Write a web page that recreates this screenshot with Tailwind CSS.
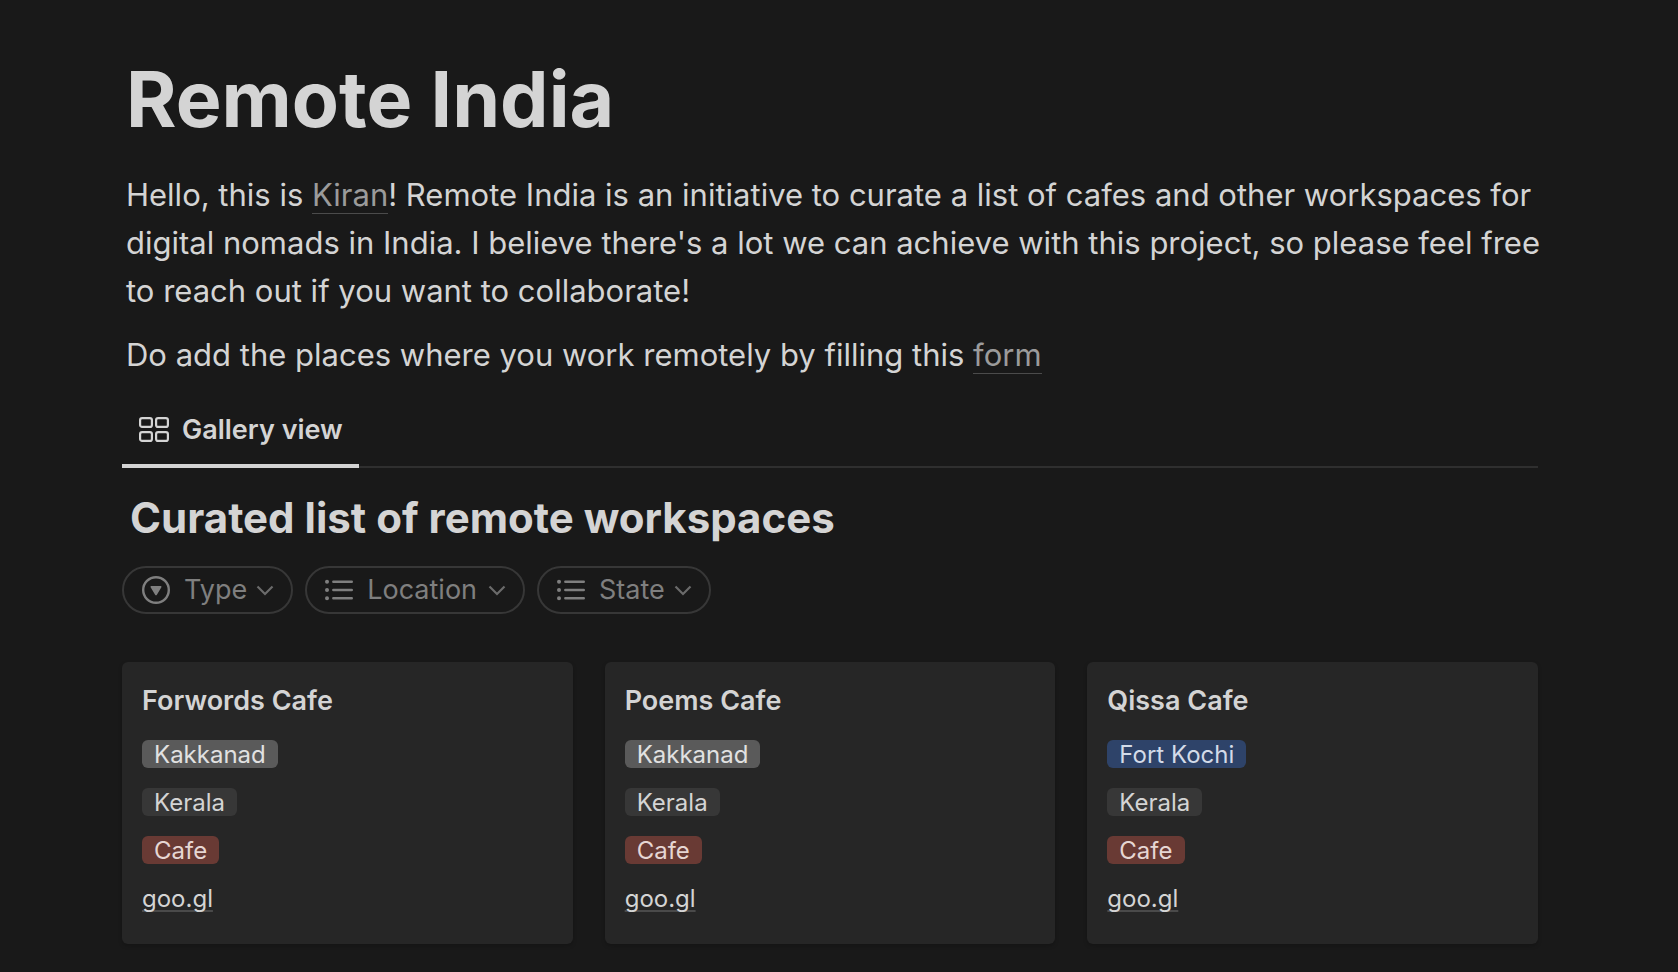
<!DOCTYPE html>
<html lang="en">
<head>
<meta charset="utf-8">
<meta name="viewport" content="width=device-width, initial-scale=1">
<title>Remote India</title>
<script src="https://cdn.jsdelivr.net/npm/@tailwindcss/browser@4"></script>
</head>
<body class="min-h-screen bg-[#191919] font-['Inter','Liberation_Sans',sans-serif] text-[#d4d4d4]">
<main class="pt-[51px] pr-[140px] pb-7 pl-[122px]">
  <header class="-mr-4 pl-1">
    <h1 class="text-[77px] leading-[96px] font-bold">Remote India</h1>
    <p class="mt-6 text-[31px] leading-[48px]">Hello, this is <a href="#" class="border-b border-[#4b4b4b] text-[#9b9b9b]">Kiran</a>! Remote India is an initiative to curate a list of cafes and other workspaces for digital nomads in India. I believe there's a lot we can achieve with this project, so please feel free to reach out if you want to collaborate!</p>
    <p class="mt-4 text-[31px] leading-[48px]">Do add the places where you work remotely by filling this <a href="#" class="border-b border-[#4b4b4b] text-[#9b9b9b]">form</a></p>
  </header>

  <nav class="mt-4 flex shadow-[inset_0_-2px_0_#2f2f2f]" aria-label="Views">
    <button type="button" class="flex h-[73px] items-center gap-3 border-b-4 border-[#d4d4d4] px-4 text-[27px] leading-8 font-semibold">
      <svg class="h-8 w-8" viewBox="0 0 32 32" fill="none" stroke="currentColor" stroke-width="2.2" aria-hidden="true">
        <rect x="2.1" y="4.1" width="11.8" height="8.800" rx="2"/><rect x="18.100" y="4.1" width="11.8" height="8.8" rx="2"/>
        <rect x="2.1" y="18.1" width="11.8" height="8.8" rx="2"/><rect x="18.1" y="18.1" width="11.8" height="8.8" rx="2"/>
      </svg>
      Gallery view
    </button>
  </nav>

  <h2 class="mt-[22px] px-2 text-[42px] leading-[56px] font-bold">Curated list of remote workspaces</h2>

  <div class="mt-5 flex gap-3 text-[27px] leading-8 text-[#7f7f7f]">
    <button type="button" class="flex h-12 items-center gap-2 rounded-full border-2 border-[#373737] px-4">
      <svg class="mr-1 h-8 w-8" viewBox="0 0 32 32" fill="none" aria-hidden="true"><circle cx="16" cy="16" r="12.8" stroke="currentColor" stroke-width="2.4"/><path d="M11.4 12h9.2c.7 0 1.100.7.8 1.300l-4.500 7.400c-.4.7-1.400.7-1.800 0l-4.500-7.400c-.3-.6.1-1.300.8-1.300z" fill="currentColor"/></svg>
      Type
      <svg class="h-5 w-5 text-[#6b6b6b]" viewBox="0 0 20 20" fill="none" stroke="currentColor" stroke-width="2.200" aria-hidden="true"><path d="M2.500 6.500l7.500 7.500 7.500-7.500"/></svg>
    </button>
    <button type="button" class="flex h-12 items-center gap-2 rounded-full border-2 border-[#373737] px-4">
      <svg class="mr-1 h-8 w-8" viewBox="0 0 32 32" fill="none" stroke="currentColor" stroke-width="2.4" stroke-linecap="round" aria-hidden="true"><path d="M10.300 7.700h18.500M10.300 16h18.500M10.300 24.300h18.500"/><path d="M4 7.700h.01M4 16h.01M4 24.300h.01" stroke-width="4"/></svg>
      Location
      <svg class="ml-0.5 h-5 w-5 text-[#6b6b6b]" viewBox="0 0 20 20" fill="none" stroke="currentColor" stroke-width="2.2" aria-hidden="true"><path d="M2.5 6.5l7.5 7.5 7.5-7.5"/></svg>
    </button>
    <button type="button" class="flex h-12 items-center gap-2 rounded-full border-2 border-[#373737] px-4">
      <svg class="mr-1 h-8 w-8" viewBox="0 0 32 32" fill="none" stroke="currentColor" stroke-width="2.4" stroke-linecap="round" aria-hidden="true"><path d="M10.3 7.7h18.5M10.3 16h18.5M10.3 24.3h18.5"/><path d="M4 7.7h.01M4 16h.01M4 24.3h.01" stroke-width="4"/></svg>
      State
      <svg class="h-5 w-5 text-[#6b6b6b]" viewBox="0 0 20 20" fill="none" stroke="currentColor" stroke-width="2.2" aria-hidden="true"><path d="M2.5 6.5l7.5 7.5 7.5-7.5"/></svg>
    </button>
  </div>

  <section class="mt-12 grid grid-cols-3 gap-8 text-2xl leading-[26px]">
    <article class="flex flex-col items-start gap-5 rounded-md bg-[#262626] px-5 pt-5 pb-8 shadow-[0_2px_4px_rgba(0,0,0,0.2)]">
      <h3 class="text-[27px] leading-[38px] font-semibold">Forwords Cafe</h3>
      <span class="rounded-md bg-[#5a5a5a] px-3 pt-0.5 text-[#e1e1e1]">Kakkanad</span>
      <span class="rounded-md bg-[#373737] px-3 pt-0.5">Kerala</span>
      <span class="rounded-md bg-[#693a34] px-3 pt-0.5 text-[#e6d6d3]">Cafe</span>
      <a href="#" class="pt-0.5 underline decoration-[#4a4a4a] decoration-2 underline-offset-3 [text-decoration-skip-ink:none]">goo.gl</a>
    </article>
    <article class="flex flex-col items-start gap-5 rounded-md bg-[#262626] px-5 pt-5 pb-8 shadow-[0_2px_4px_rgba(0,0,0,0.2)]">
      <h3 class="text-[27px] leading-[38px] font-semibold">Poems Cafe</h3>
      <span class="rounded-md bg-[#5a5a5a] px-3 pt-0.5 text-[#e1e1e1]">Kakkanad</span>
      <span class="rounded-md bg-[#373737] px-3 pt-0.5">Kerala</span>
      <span class="rounded-md bg-[#693a34] px-3 pt-0.5 text-[#e6d6d3]">Cafe</span>
      <a href="#" class="pt-0.5 underline decoration-[#4a4a4a] decoration-2 underline-offset-3 [text-decoration-skip-ink:none]">goo.gl</a>
    </article>
    <article class="flex flex-col items-start gap-5 rounded-md bg-[#262626] px-5 pt-5 pb-8 shadow-[0_2px_4px_rgba(0,0,0,0.2)]">
      <h3 class="text-[27px] leading-[38px] font-semibold">Qissa Cafe</h3>
      <span class="rounded-md bg-[#2e4369] px-3 pt-0.5 text-[#d3dbe8]">Fort Kochi</span>
      <span class="rounded-md bg-[#373737] px-3 pt-0.5">Kerala</span>
      <span class="rounded-md bg-[#693a34] px-3 pt-0.5 text-[#e6d6d3]">Cafe</span>
      <a href="#" class="pt-0.5 underline decoration-[#4a4a4a] decoration-2 underline-offset-3 [text-decoration-skip-ink:none]">goo.gl</a>
    </article>
  </section>
</main>
</body>
</html>
